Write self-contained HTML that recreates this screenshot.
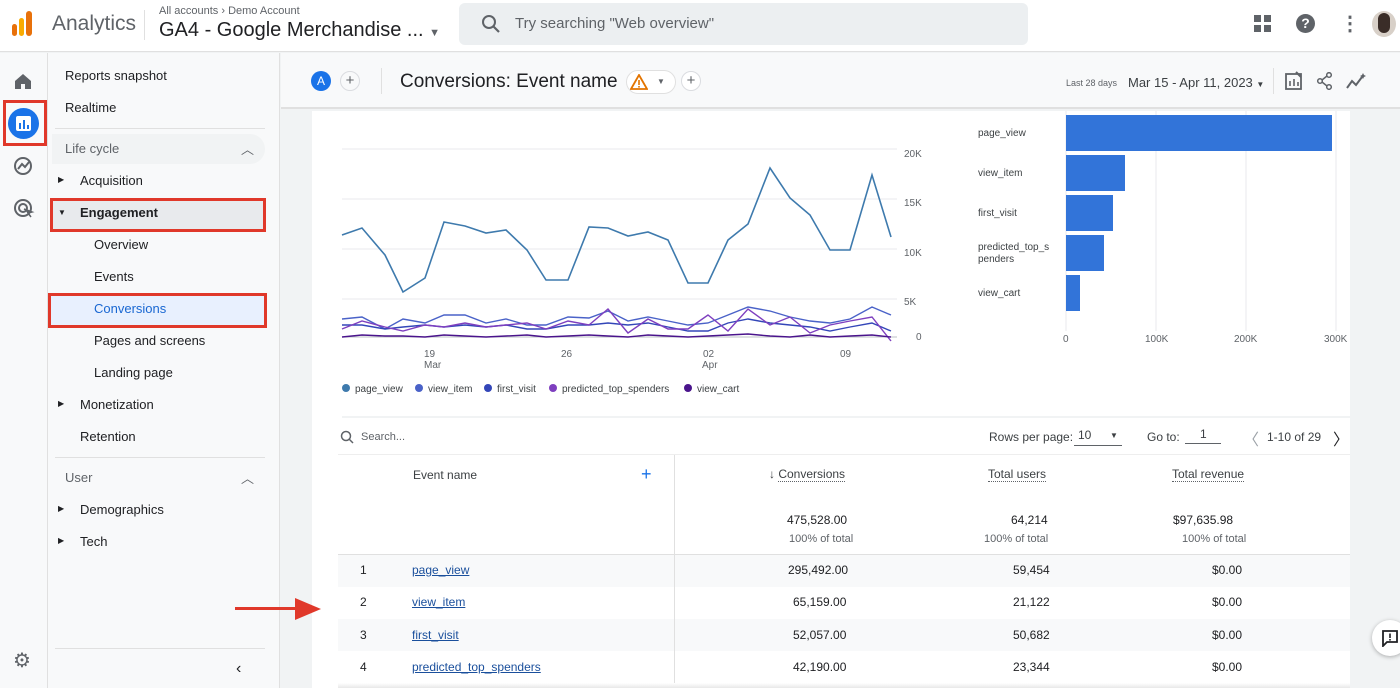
<!DOCTYPE html>
<html><head><meta charset="utf-8"><style>
*{margin:0;padding:0;box-sizing:border-box}
body{width:1400px;height:688px;overflow:hidden;font-family:"Liberation Sans",Arial,sans-serif;background:#f1f3f4;position:relative;color:#202124}
.a{position:absolute}
.t{position:absolute;white-space:nowrap}
.nav{font-size:13px;color:#202124}
.rb{border:3px solid #e0382a}
.s11{font-size:11px;color:#5f6368}
.lnk{color:#1a4f9c;text-decoration:underline;font-size:12px}
.num{font-size:12px;text-align:right}
</style></head><body>
<!-- top bar -->
<div class="a" style="left:0;top:0;width:1400px;height:52px;background:#fff;border-bottom:1px solid #e0e0e0"></div>
<div class="a" style="left:12px;top:24px;width:5px;height:12px;background:#e8710a;border-radius:3px"></div>
<div class="a" style="left:19px;top:18px;width:5px;height:18px;background:#f9ab00;border-radius:3px"></div>
<div class="a" style="left:26px;top:11px;width:6px;height:25px;background:#e8710a;border-radius:3px"></div>
<div class="t" style="left:52px;top:12px;font-size:21px;color:#5f6368">Analytics</div>
<div class="a" style="left:144px;top:10px;width:1px;height:30px;background:#e0e0e0"></div>
<div class="t" style="left:159px;top:5px;font-size:11px;color:#5f6368">All accounts › Demo Account</div>
<div class="t" style="left:159px;top:19px;font-size:20px;color:#202124">GA4 - Google Merchandise ... <span style="font-size:11px;color:#5f6368">▼</span></div>
<div class="a" style="left:459px;top:3px;width:569px;height:42px;background:#eceff1;border-radius:6px"></div>
<svg class="a" style="left:481px;top:14px" width="20" height="20"><circle cx="8" cy="8" r="6" fill="none" stroke="#5f6368" stroke-width="2"/><line x1="12" y1="12" x2="18" y2="18" stroke="#5f6368" stroke-width="2.2"/></svg>
<div class="t" style="left:515px;top:15px;font-size:15px;color:#5f6368">Try searching "Web overview"</div>
<svg class="a" style="left:1254px;top:15px" width="18" height="18" fill="#5f6368"><rect x="0" y="0" width="7" height="7"/><rect x="10" y="0" width="7" height="7"/><rect x="0" y="10" width="7" height="7"/><rect x="10" y="10" width="7" height="7"/></svg>
<div class="a" style="left:1296px;top:14px;width:19px;height:19px;border-radius:50%;background:#5f6368;color:#fff;font-size:14px;font-weight:bold;text-align:center;line-height:19px">?</div>
<div class="t" style="left:1340px;top:11px;font-size:20px;color:#5f6368;font-weight:bold">⋮</div>
<div class="a" style="left:1372px;top:11px;width:24px;height:26px;border-radius:50%;background:#d8d0c8"></div>
<div class="a" style="left:1378px;top:13px;width:12px;height:20px;border-radius:6px;background:#3a2d28"></div>
<!-- left rail -->
<div class="a" style="left:0;top:53px;width:48px;height:635px;background:#f8f9fa;border-right:1px solid #e0e0e0"></div>
<svg class="a" style="left:13px;top:72px" width="20" height="18"><path d="M2 9L10 2L18 9V17H12V12H8V17H2Z" fill="#5f6368"/></svg>
<div class="a rb" style="left:3px;top:100px;width:44px;height:46px"></div>
<div class="a" style="left:8px;top:108px;width:31px;height:31px;border-radius:50%;background:#1a73e8"></div>
<svg class="a" style="left:15px;top:115px" width="17" height="17"><rect x="1" y="1" width="15" height="15" rx="2" fill="#fff"/><rect x="4" y="8" width="2" height="6" fill="#1a73e8"/><rect x="8" y="5" width="2" height="9" fill="#1a73e8"/><rect x="12" y="10" width="2" height="4" fill="#1a73e8"/></svg>
<svg class="a" style="left:13px;top:156px" width="22" height="22"><circle cx="10" cy="10" r="8" fill="none" stroke="#5f6368" stroke-width="2"/><path d="M5 13L9 8L12 11L16 6" fill="none" stroke="#5f6368" stroke-width="2"/></svg>
<svg class="a" style="left:13px;top:198px" width="22" height="22"><circle cx="10" cy="10" r="8" fill="none" stroke="#5f6368" stroke-width="2"/><circle cx="10" cy="10" r="4" fill="none" stroke="#5f6368" stroke-width="2"/><path d="M11 11L19 14L15 15L18 19" fill="#5f6368" stroke="#5f6368" stroke-width="1.5"/></svg>
<div class="t" style="left:13px;top:648px;font-size:20px;color:#5f6368">⚙</div>
<!-- sidebar -->
<div class="a" style="left:48px;top:53px;width:232px;height:635px;background:#f8f9fa;border-right:1px solid #e0e0e0"></div>
<div class="t nav" style="left:65px;top:68px">Reports snapshot</div>
<div class="t nav" style="left:65px;top:100px">Realtime</div>
<div class="a" style="left:55px;top:128px;width:210px;height:1px;background:#e0e0e0"></div>
<div class="a" style="left:52px;top:134px;width:213px;height:30px;background:#f1f3f4;border-radius:0 15px 15px 0"></div>
<div class="t" style="left:65px;top:141px;font-size:13px;color:#5f6368">Life cycle</div>
<div class="t" style="left:241px;top:139px;font-size:13px;color:#5f6368">︿</div>
<div class="t" style="left:58px;top:175px;font-size:8px;color:#202124">▶</div>
<div class="t nav" style="left:80px;top:173px">Acquisition</div>
<div class="a" style="left:52px;top:200px;width:213px;height:30px;background:#e8eaed"></div>
<div class="a rb" style="left:50px;top:198px;width:216px;height:34px"></div>
<div class="t" style="left:58px;top:208px;font-size:8px">▼</div>
<div class="t nav" style="left:80px;top:205px;font-weight:bold">Engagement</div>
<div class="t nav" style="left:94px;top:237px">Overview</div>
<div class="t nav" style="left:94px;top:269px">Events</div>
<div class="a" style="left:50px;top:294px;width:216px;height:33px;background:#e8f0fe"></div>
<div class="a rb" style="left:48px;top:293px;width:219px;height:35px"></div>
<div class="t" style="left:94px;top:301px;font-size:13px;color:#1967d2">Conversions</div>
<div class="t nav" style="left:94px;top:333px">Pages and screens</div>
<div class="t nav" style="left:94px;top:365px">Landing page</div>
<div class="t" style="left:58px;top:399px;font-size:8px">▶</div>
<div class="t nav" style="left:80px;top:397px">Monetization</div>
<div class="t nav" style="left:80px;top:429px">Retention</div>
<div class="a" style="left:55px;top:457px;width:210px;height:1px;background:#e0e0e0"></div>
<div class="t" style="left:65px;top:470px;font-size:13px;color:#5f6368">User</div>
<div class="t" style="left:241px;top:468px;font-size:13px;color:#5f6368">︿</div>
<div class="t" style="left:58px;top:504px;font-size:8px">▶</div>
<div class="t nav" style="left:80px;top:502px">Demographics</div>
<div class="t" style="left:58px;top:536px;font-size:8px">▶</div>
<div class="t nav" style="left:80px;top:534px">Tech</div>
<div class="a" style="left:55px;top:648px;width:210px;height:1px;background:#e0e0e0"></div>
<div class="t" style="left:236px;top:660px;font-size:16px;color:#202124">‹</div>
<!-- header -->
<div class="a" style="left:281px;top:53px;width:1119px;height:56px;background:#f8f9fa;border-bottom:2px solid #e0e0e0"></div>
<div class="a" style="left:311px;top:71px;width:20px;height:20px;border-radius:50%;background:#1a73e8;color:#fff;font-size:12px;text-align:center;line-height:20px">A</div>
<div class="a" style="left:340px;top:71px;width:20px;height:20px;border-radius:50%;border:1px solid #dadce0;color:#5f6368;font-size:15px;text-align:center;line-height:17px">+</div>
<div class="a" style="left:381px;top:68px;width:1px;height:26px;background:#e0e0e0"></div>
<div class="t" style="left:400px;top:71px;font-size:19px;color:#202124">Conversions: Event name</div>
<div class="a" style="left:626px;top:70px;width:50px;height:24px;border-radius:12px;border:1px solid #e0e0e0;background:#fff"></div>
<svg class="a" style="left:630px;top:74px" width="18" height="16"><path d="M9 1L17 15H1Z" fill="none" stroke="#e37400" stroke-width="1.8"/><rect x="8.2" y="6" width="1.6" height="5" fill="#e37400"/><rect x="8.2" y="12" width="1.6" height="1.6" fill="#e37400"/></svg>
<div class="t" style="left:657px;top:77px;font-size:8px;color:#5f6368">▼</div>
<div class="a" style="left:681px;top:71px;width:20px;height:20px;border-radius:50%;border:1px solid #dadce0;color:#5f6368;font-size:15px;text-align:center;line-height:17px;background:#fff">+</div>
<div class="t" style="left:1066px;top:78px;font-size:9px;color:#5f6368">Last 28 days</div>
<div class="t" style="left:1128px;top:75px;font-size:13px;color:#3c4043">Mar 15 - Apr 11, 2023 <span style="font-size:8px">▼</span></div>
<div class="a" style="left:1273px;top:68px;width:1px;height:26px;background:#e0e0e0"></div>
<svg class="a" style="left:1284px;top:71px" width="20" height="20"><rect x="2" y="3" width="15" height="15" fill="none" stroke="#5f6368" stroke-width="1.8"/><path d="M6 15V10M10 15V8M14 15V11" stroke="#5f6368" stroke-width="1.6"/><path d="M12 1L17 6" stroke="#5f6368" stroke-width="2"/></svg>
<svg class="a" style="left:1316px;top:72px" width="18" height="18"><circle cx="13" cy="3" r="2.3" fill="none" stroke="#5f6368" stroke-width="1.5"/><circle cx="4" cy="9" r="2.3" fill="none" stroke="#5f6368" stroke-width="1.5"/><circle cx="13" cy="15" r="2.3" fill="none" stroke="#5f6368" stroke-width="1.5"/><path d="M6 8L11 4M6 10L11 14" stroke="#5f6368" stroke-width="1.5"/></svg>
<svg class="a" style="left:1346px;top:72px" width="22" height="18"><path d="M1 16L6 9L10 13L16 5" fill="none" stroke="#5f6368" stroke-width="2"/><path d="M17 1L18 3L20 4L18 5L17 7L16 5L14 4L16 3Z" fill="#5f6368"/></svg>
<!-- main card -->
<div class="a" style="left:312px;top:111px;width:1038px;height:577px;background:#fff"></div>
<svg class="a" style="left:312px;top:111px" width="1038" height="310" font-family="Liberation Sans,Arial,sans-serif">
<g stroke="#e8eaed" stroke-width="1"><line x1="30" y1="38" x2="585" y2="38"/><line x1="30" y1="88" x2="585" y2="88"/><line x1="30" y1="138" x2="585" y2="138"/><line x1="30" y1="188" x2="585" y2="188"/><line x1="30" y1="226" x2="585" y2="226" stroke="#bdc1c6"/></g>
<g font-size="10" fill="#5f6368"><text x="592" y="46">20K</text><text x="592" y="95">15K</text><text x="592" y="145">10K</text><text x="592" y="194">5K</text><text x="604" y="229">0</text>
<text x="112" y="246">19</text><text x="112" y="257">Mar</text><text x="249" y="246">26</text><text x="391" y="246">02</text><text x="390" y="257">Apr</text><text x="528" y="246">09</text></g>
<polyline fill="none" stroke="#3e7aad" stroke-width="1.6" points="30,124 50,117 73,144 91,181 113,167 132,111 153,115 174,122 194,119 215,139 234,169 256,169 277,116 296,117 316,125 336,121 356,129 376,172 396,172 416,129 436,113 458,57 478,87 498,104 518,139 538,139 560,64 579,126"/>
<polyline fill="none" stroke="#4a62c8" stroke-width="1.4" points="30,208 50,206 73,218 91,208 113,212 132,204 153,204 174,212 194,208 215,214 234,214 256,206 277,207 296,200 316,210 336,206 356,210 376,214 396,212 416,204 436,196 458,200 478,206 498,210 518,212 538,208 560,196 579,204"/>
<polyline fill="none" stroke="#3346b8" stroke-width="1.4" points="30,214 50,214 73,218 91,216 113,214 132,216 153,214 174,216 194,214 215,218 234,218 256,214 277,214 296,212 316,214 336,212 356,216 376,220 396,220 416,212 436,208 458,212 478,214 498,216 518,220 538,216 560,212 579,220"/>
<polyline fill="none" stroke="#7e3fbf" stroke-width="1.4" points="30,218 50,210 73,216 91,220 113,214 132,216 153,212 174,216 194,214 215,212 234,218 256,210 277,214 296,198 316,222 336,208 356,218 376,218 396,204 416,220 436,198 458,214 478,206 498,222 518,214 538,210 560,206 579,230"/>
<polyline fill="none" stroke="#4a148c" stroke-width="1.4" points="30,226 50,224 73,225 91,225 113,226 132,224 153,225 174,226 194,225 215,224 234,226 256,225 277,224 296,225 316,226 336,224 356,225 376,226 396,225 416,224 436,223 458,225 478,226 498,224 518,226 538,225 560,224 579,226"/>
<g font-size="10" fill="#3c4043"><circle cx="34" cy="277" r="4" fill="#3e7aad"/><text x="43" y="281">page_view</text><circle cx="107" cy="277" r="4" fill="#4a62c8"/><text x="116" y="281">view_item</text><circle cx="176" cy="277" r="4" fill="#3346b8"/><text x="185" y="281">first_visit</text><circle cx="241" cy="277" r="4" fill="#7e3fbf"/><text x="250" y="281">predicted_top_spenders</text><circle cx="376" cy="277" r="4" fill="#4a148c"/><text x="385" y="281">view_cart</text></g>
<g stroke="#e8eaed"><line x1="754" y1="0" x2="754" y2="220"/><line x1="844" y1="0" x2="844" y2="220"/><line x1="934" y1="0" x2="934" y2="220"/><line x1="1024" y1="0" x2="1024" y2="220"/></g>
<g fill="#3274d9"><rect x="754" y="4" width="266" height="36"/><rect x="754" y="44" width="59" height="36"/><rect x="754" y="84" width="47" height="36"/><rect x="754" y="124" width="38" height="36"/><rect x="754" y="164" width="14" height="36"/></g>
<g font-size="10" fill="#3c4043"><text x="666" y="25">page_view</text><text x="666" y="65">view_item</text><text x="666" y="105">first_visit</text><text x="666" y="139">predicted_top_s</text><text x="666" y="151">penders</text><text x="666" y="185">view_cart</text></g>
<g font-size="10" fill="#5f6368"><text x="751" y="231">0</text><text x="833" y="231">100K</text><text x="922" y="231">200K</text><text x="1012" y="231">300K</text></g>
<line x1="30" y1="306" x2="1038" y2="306" stroke="#f1f3f4" stroke-width="2"/>
</svg>
<!-- table -->
<svg class="a" style="left:340px;top:430px" width="14" height="14"><circle cx="6" cy="6" r="4.5" fill="none" stroke="#5f6368" stroke-width="1.5"/><line x1="9" y1="9" x2="13" y2="13" stroke="#5f6368" stroke-width="1.5"/></svg>
<div class="t" style="left:361px;top:431px;font-size:11px;color:#5f6368">Search...</div>
<div class="t" style="left:989px;top:430px;font-size:12px;color:#3c4043">Rows per page:</div>
<div class="t" style="left:1078px;top:428px;font-size:12px;color:#3c4043">10</div>
<div class="t" style="left:1110px;top:431px;font-size:8px;color:#3c4043">▼</div>
<div class="a" style="left:1074px;top:445px;width:48px;height:1px;background:#5f6368"></div>
<div class="t" style="left:1147px;top:430px;font-size:12px;color:#3c4043">Go to:</div>
<div class="t" style="left:1200px;top:427px;font-size:12px;color:#3c4043">1</div>
<div class="a" style="left:1185px;top:443px;width:36px;height:1px;background:#5f6368"></div>
<div class="t" style="left:1243px;top:426px;font-size:16px;color:#9aa0a6">〈</div>
<div class="t" style="left:1267px;top:430px;font-size:12px;color:#3c4043">1-10 of 29</div>
<div class="t" style="left:1333px;top:426px;font-size:16px;color:#202124">〉</div>
<div class="a" style="left:338px;top:454px;width:1012px;height:1px;background:#eee"></div>
<div class="a" style="left:674px;top:455px;width:1px;height:233px;background:#e0e0e0"></div>
<div class="t" style="left:413px;top:468px;font-size:12px;color:#3c4043">Event name</div>
<div class="t" style="left:641px;top:464px;font-size:18px;color:#1a73e8">+</div>
<div class="t" style="left:769px;top:467px;font-size:12px;color:#3c4043">↓ <span style="border-bottom:1px dotted #5f6368">Conversions</span></div>
<div class="t" style="left:988px;top:467px;font-size:12px;color:#3c4043;border-bottom:1px dotted #5f6368">Total users</div>
<div class="t" style="left:1172px;top:467px;font-size:12px;color:#3c4043;border-bottom:1px dotted #5f6368">Total revenue</div>
<div class="t" style="left:787px;top:513px;font-size:12px">475,528.00</div>
<div class="t" style="left:1011px;top:513px;font-size:12px">64,214</div>
<div class="t" style="left:1173px;top:513px;font-size:12px">$97,635.98</div>
<div class="t s11" style="left:789px;top:533px">100% of total</div>
<div class="t s11" style="left:984px;top:533px">100% of total</div>
<div class="t s11" style="left:1182px;top:533px">100% of total</div>
<div class="a" style="left:338px;top:554px;width:1012px;height:1px;background:#e0e0e0"></div>
<div class="a" style="left:338px;top:555px;width:1012px;height:32px;background:#f8f9fa"></div>
<div class="a" style="left:338px;top:619px;width:1012px;height:32px;background:#f8f9fa"></div>
<div class="a" style="left:674px;top:555px;width:1px;height:133px;background:#e0e0e0"></div>
<div class="t" style="left:360px;top:563px;font-size:12px">1</div><div class="t lnk" style="left:412px;top:563px">page_view</div><div class="t num" style="left:788px;top:563px">295,492.00</div><div class="t num" style="left:1013px;top:563px">59,454</div><div class="t num" style="left:1212px;top:563px">$0.00</div>
<div class="t" style="left:360px;top:595px;font-size:12px">2</div><div class="t lnk" style="left:412px;top:595px">view_item</div><div class="t num" style="left:793px;top:595px">65,159.00</div><div class="t num" style="left:1013px;top:595px">21,122</div><div class="t num" style="left:1212px;top:595px">$0.00</div>
<div class="t" style="left:360px;top:628px;font-size:12px">3</div><div class="t lnk" style="left:412px;top:628px">first_visit</div><div class="t num" style="left:793px;top:628px">52,057.00</div><div class="t num" style="left:1013px;top:628px">50,682</div><div class="t num" style="left:1212px;top:628px">$0.00</div>
<div class="t" style="left:360px;top:660px;font-size:12px">4</div><div class="t lnk" style="left:412px;top:660px">predicted_top_spenders</div><div class="t num" style="left:793px;top:660px">42,190.00</div><div class="t num" style="left:1013px;top:660px">23,344</div><div class="t num" style="left:1212px;top:660px">$0.00</div>
<div class="a" style="left:338px;top:683px;width:1012px;height:5px;background:linear-gradient(#fff,#e8e8e8)"></div>
<!-- arrow -->
<div class="a" style="left:235px;top:607px;width:65px;height:3px;background:#e0382a"></div>
<svg class="a" style="left:295px;top:598px" width="26" height="22"><path d="M0 0L26 11L0 22Z" fill="#e0382a"/></svg>
<!-- feedback -->
<div class="a" style="left:1372px;top:620px;width:36px;height:36px;border-radius:50%;background:#fff;box-shadow:0 1px 4px rgba(0,0,0,.3)"></div>
<svg class="a" style="left:1381px;top:629px" width="18" height="18"><path d="M2 2H16V13H6L2 17Z" fill="none" stroke="#202124" stroke-width="1.8"/><rect x="8.2" y="4.5" width="1.6" height="4.5" fill="#202124"/><rect x="8.2" y="10" width="1.6" height="1.6" fill="#202124"/></svg>
</body></html>
